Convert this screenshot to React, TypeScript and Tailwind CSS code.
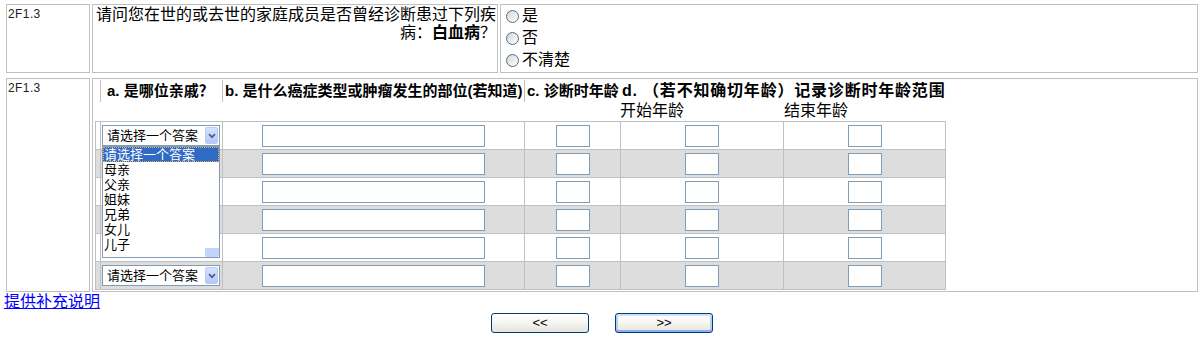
import React from "react";

const FONT = "font-[family-name:'Liberation_Sans','Noto_Sans_CJK_SC',sans-serif]";

function Chevron() {
  return (
    <svg width="8" height="6" viewBox="0 0 8 6" fill="none">
      <path d="M1 1.2 L4 4.2 L7 1.2" stroke="#4d6185" strokeWidth="1.7" />
    </svg>
  );
}

function Select() {
  return (
    <div className="w-[118px] h-[21px] border border-[#7f9db9] bg-white flex p-[1px]">
      <span className="flex-1 flex items-center pl-[3px] text-[13px] leading-[15px] whitespace-nowrap">请选择一个答案</span>
      <span className="w-[13px] h-full rounded-[2px] border border-[#b9cbf3] bg-[linear-gradient(180deg,#d6e1fd,#b4c8f6)] flex items-center justify-center">
        <Chevron />
      </span>
    </div>
  );
}

function TextBox({ w }: { w: string }) {
  return <div className={`${w} h-[22px] border border-[#7f9db9] bg-white`} />;
}

function Radio({ label }: { label: string }) {
  return (
    <div className="flex items-center h-[22px]">
      <span className="w-[13px] h-[13px] rounded-full border border-[#4b6f96] bg-[linear-gradient(135deg,#d6d6d0,#ffffff)]" />
      <span className="ml-[3px] text-[16px] leading-[18px]">{label}</span>
    </div>
  );
}

const options = ["母亲", "父亲", "姐妹", "兄弟", "女儿", "儿子"];

function DataRow({ idx }: { idx: number }) {
  const gray = idx % 2 === 1;
  const covered = idx >= 1 && idx <= 4;
  return (
    <div className={`flex h-[28px] border-b border-[#c0c0c0] ${gray ? "bg-[#dddddd]" : "bg-white"}`}>
      <div className="w-[5px] border-r border-[#c0c0c0]" />
      <div className="relative w-[122px] border-r border-[#c0c0c0] pl-[1px] pt-[3px]">
        {!covered && <Select />}
        {idx === 0 && (
          <div className="absolute left-[1px] top-[24px] z-10 w-[118px] h-[112px] border border-[#7f9db9] bg-white text-[13px] leading-[15px]">
            <div className="h-[15px] bg-[#316ac5] text-white border border-dotted border-[#e8b04a] leading-[13px] whitespace-nowrap">请选择一个答案</div>
            {options.map((o) => (
              <div key={o} className="h-[15px] pl-[1px] whitespace-nowrap">{o}</div>
            ))}
            <div className="absolute right-0 bottom-0 w-[14px] h-[9px] rounded-b-[2px] bg-[#c3d4fb]" />
          </div>
        )}
      </div>
      <div className="w-[302px] border-r border-[#c0c0c0] flex justify-center pt-[3px]">
        <TextBox w="w-[223px]" />
      </div>
      <div className="w-[96px] border-r border-[#c0c0c0] flex justify-center pt-[3px]">
        <TextBox w="w-[34px]" />
      </div>
      <div className="w-[163px] border-r border-[#c0c0c0] flex justify-center pt-[3px]">
        <TextBox w="w-[34px]" />
      </div>
      <div className="flex-1 flex justify-center pt-[3px]">
        <TextBox w="w-[34px]" />
      </div>
    </div>
  );
}

function XPButton({ label, focused }: { label: string; focused?: boolean }) {
  return (
    <button
      className={`w-[98px] h-[20px] border border-[#003c74] rounded-[3px] bg-[linear-gradient(180deg,#ffffff,#f4f4f0_55%,#e4e3dc)] text-[13px] leading-[16px] text-black flex items-center justify-center ${
        focused
          ? "shadow-[inset_0_2px_0_#cfe0fa,inset_0_-2px_0_#8fb0ef,inset_2px_0_0_#b9cff6,inset_-2px_0_0_#b9cff6]"
          : ""
      }`}
    >
      {label}
    </button>
  );
}

export default function App() {
  return (
    <div className={`bg-white text-black ${FONT}`}>
      <div className="pl-[6px] pt-[4px]">
        {/* Row 1 */}
        <div className="flex gap-[2px] h-[69px]">
          <div className="w-[84px] border border-[#c0c0c0] px-[1px] pt-[2px] text-[12px] leading-[14px] tracking-[0.4px] text-[#222]">
            2F1.3
          </div>
          <div className="w-[406px] border border-[#c0c0c0] px-[1px] pt-[1px] text-right text-[16px] leading-[18px] whitespace-nowrap">
            请问您在世的或去世的家庭成员是否曾经诊断患过下列疾
            <br />
            病：<b>白血病</b>？
          </div>
          <div className="w-[698px] border border-[#c0c0c0] pl-[5px] flex flex-col">
            <Radio label="是" />
            <Radio label="否" />
            <Radio label="不清楚" />
          </div>
        </div>

        {/* Row 2 */}
        <div className="mt-[5px] flex gap-[2px] h-[214px]">
          <div className="w-[84px] border border-[#c0c0c0] px-[1px] pt-[2px] text-[12px] leading-[14px] tracking-[0.4px] text-[#222]">
            2F1.3
          </div>
          <div className="w-[1106px] border border-[#c0c0c0] p-[1px]">
            {/* header */}
            <div className="ml-[6px] flex h-[22px] whitespace-nowrap font-bold text-[15px] leading-[20px]">
              <div className="w-[122px] border-l border-[#c0c0c0] pl-[6px] flex items-center">a. 是哪位亲戚？</div>
              <div className="w-[302px] border-l border-[#c0c0c0] pl-[2px] flex items-center">b. 是什么癌症类型或肿瘤发生的部位(若知道)</div>
              <div className="w-[96px] border-l border-[#c0c0c0] pl-[2px] flex items-center">c. 诊断时年龄</div>
              <div className="pl-[2px] flex items-center text-[16px] tracking-[0.8px]">d. （若不知确切年龄）记录诊断时年龄范围</div>
            </div>
            {/* sub header */}
            <div className="flex h-[19px] text-[16px] leading-[18px] whitespace-nowrap">
              <div className="w-[526px]" />
              <div className="w-[164px]">开始年龄</div>
              <div>结束年龄</div>
            </div>
            {/* data table */}
            <div className="ml-[1px] w-[851px] border-l border-r border-t border-[#c0c0c0]">
              {[0, 1, 2, 3, 4, 5].map((i) => (
                <DataRow key={i} idx={i} />
              ))}
            </div>
          </div>
        </div>
      </div>

      <div className="pl-[4px] mt-[1px] h-[18px] text-[16px] leading-[18px]">
        <a href="#" className="text-[#0000ff] underline">提供补充说明</a>
      </div>

      <div className="mt-[2px] pl-[3px] flex justify-center gap-[26px]">
        <XPButton label="<<" />
        <XPButton label=">>" focused />
      </div>
    </div>
  );
}
